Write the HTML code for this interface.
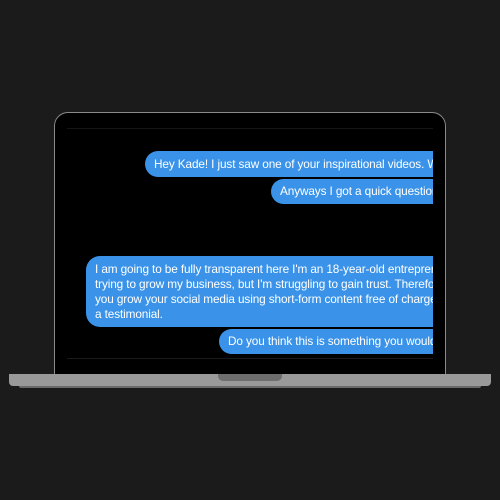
<!DOCTYPE html>
<html><head><style>
body{margin:0;width:500px;height:500px;background:#1b1b1b;position:relative;overflow:hidden;font-family:"Liberation Sans",sans-serif}
.frame{position:absolute;left:54px;top:112px;width:390px;height:270px;border:1px solid #8a8a8a;border-radius:14px 14px 0 0;background:#000}
.clip{position:absolute;left:67px;top:128px;width:366px;height:229px;overflow:hidden;border-top:1px solid #151515;border-bottom:1px solid #1a1a1a}
.b{position:absolute;background:#3a93e9;color:#fff;font-size:11.8px;letter-spacing:-0.12px;line-height:15px;white-space:nowrap;border-radius:13px 0 0 13px;padding:5px 0 0 9px;box-sizing:border-box;right:0}
.base{position:absolute;left:9px;top:374px;width:482px;height:12px;background:#999;border-radius:0 0 4px 4px}
.sh{position:absolute;left:19px;top:386px;width:462px;height:2px;background:#6a6a6a;border-radius:0 0 3px 3px}
.notch{position:absolute;left:218px;top:374px;width:64px;height:7px;background:#6e6e6e;border-radius:0 0 5px 5px}
</style></head><body>
<div class="frame"></div>
<div class="clip">
<div class="b" style="top:22px;width:288px;height:26px;padding-top:6px">Hey Kade! I just saw one of your inspirational videos. What</div>
<div class="b" style="top:50px;width:162px;height:25px;padding-top:5px">Anyways I got a quick question</div>
<div class="b" style="top:127px;width:347px;height:71px;padding-top:6px;border-radius:14px 0 0 14px">I am going to be fully transparent here I'm an 18-year-old entrepreneur<br>trying to grow my business, but I'm struggling to gain trust. Therefore<br>you grow your social media using short-form content free of charge<br>a testimonial.</div>
<div class="b" style="top:200px;width:214px;height:25px;padding-top:5px">Do you think this is something you would</div>
</div>
<div class="base"></div><div class="sh"></div><div class="notch"></div>
</body></html>
